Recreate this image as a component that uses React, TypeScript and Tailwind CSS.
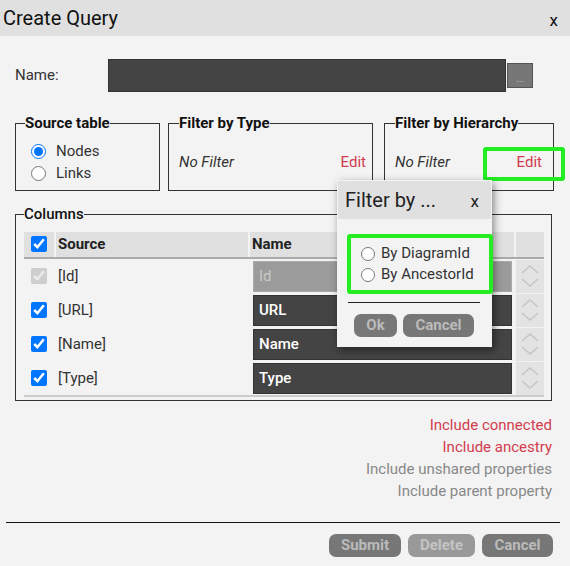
import React from "react";

const rows = [
  { source: "[Id]", name: "Id", locked: true },
  { source: "[URL]", name: "URL", locked: false },
  { source: "[Name]", name: "Name", locked: false },
  { source: "[Type]", name: "Type", locked: false },
];

function UpDown() {
  return (
    <svg width="18" height="26" viewBox="0 0 18 26" fill="none" stroke="#c4c4c4" strokeWidth="1.4">
      <path d="M1 10 L9 3 L17 10" />
      <path d="M1 16 L9 23 L17 16" />
    </svg>
  );
}

function FilterPopup() {
  return (
    <div className="absolute left-[337px] top-[180px] w-[155px] h-[167px] bg-[#f3f3f3] shadow-[2px_3px_8px_rgba(0,0,0,0.45)]">
      <div className="h-[38px] mx-[1px] mt-[1px] bg-[#e0e0e0] flex items-center justify-between pl-[7px] pr-[12px]">
        <span className="text-[20px] text-[#222]">Filter by ...</span>
        <span className="text-[17px] text-[#222] mt-[4px]">x</span>
      </div>
      <div className="ml-[10px] mt-[15px] w-[146px] h-[60px] border-[4px] border-[#22ee22] rounded-[3px] flex flex-col justify-center pl-[10px]">
        {["By DiagramId", "By AncestorId"].map(t => (
          <label key={t} className="flex items-center gap-[6px] text-[15px] leading-[21px] text-[#333]">
            <input type="radio" name="hier" className="m-0 w-[14px] h-[14px]" />
            {t}
          </label>
        ))}
      </div>
      <div className="mx-[11px] mt-[8px] w-[132px] border-t border-[#222]" />
      <div className="flex gap-[6px] ml-[17px] mt-[11px]">
        <button className="h-[23px] w-[43px] rounded-[7px] bg-[#777] text-[#bbb] text-[15px] font-bold">Ok</button>
        <button className="h-[23px] w-[71px] rounded-[7px] bg-[#777] text-[#bbb] text-[15px] font-bold">Cancel</button>
      </div>
    </div>
  );
}

export default function App() {
  return (
    <div className="relative w-[570px] h-[566px] bg-[#f3f3f3] overflow-hidden font-['Roboto',sans-serif] text-[#333]">
      {/* title bar */}
      <div className="h-[36px] bg-[#e0e0e0] flex items-center justify-between pl-[3px] pr-[12px]">
        <span className="text-[20px] text-[#111]">Create Query</span>
        <span className="text-[17px] text-[#111] mt-[6px]">x</span>
      </div>

      {/* name row */}
      <div className="flex items-center mt-[23px] pl-[15px]">
        <span className="w-[93px] text-[15px] text-[#333]">Name:</span>
        <div className="w-[398px] h-[33px] bg-[#444] border border-[#333]" />
        <button className="ml-[1px] w-[26px] h-[25px] bg-[#777] border border-[#555] text-[#bbb] text-[10px] leading-none pt-[6px]">...</button>
      </div>

      {/* filters row */}
      <div className="flex mt-[20px] pl-[15px]">
        <fieldset className="w-[145px] h-[79px] border border-[#333] pl-[9px] pt-[6px]">
          <legend className="text-[15px] font-bold text-[#111] px-0">Source table</legend>
          <div className="ml-[6px]">
            <label className="flex items-center gap-[10px] text-[15px] text-[#333] h-[22px]">
              <input type="radio" name="src" defaultChecked className="m-0 w-[15px] h-[15px]" />
              Nodes
            </label>
            <label className="flex items-center gap-[10px] text-[15px] text-[#333] h-[22px]">
              <input type="radio" name="src" className="m-0 w-[15px] h-[15px]" />
              Links
            </label>
          </div>
        </fieldset>
        <fieldset className="ml-[8px] w-[205px] h-[79px] border border-[#333] pl-[10px] pr-[6px]">
          <legend className="text-[15px] font-bold text-[#111] px-0">Filter by Type</legend>
          <div className="flex justify-between items-center mt-[16px] text-[15px]">
            <span className="italic text-[#333]">No Filter</span>
            <span className="text-[#d23c4e]">Edit</span>
          </div>
        </fieldset>
        <fieldset className="ml-[11px] w-[170px] h-[79px] border border-[#333] pl-[10px] pr-[10px]">
          <legend className="text-[15px] font-bold text-[#111] px-0">Filter by Hierarchy</legend>
          <div className="flex justify-between items-center mt-[16px] text-[15px]">
            <span className="italic text-[#333]">No Filter</span>
            <span className="text-[#d23c4e] mr-[1px]">Edit</span>
          </div>
        </fieldset>
      </div>

      {/* columns */}
      <fieldset className="ml-[15px] mt-[12px] w-[537px] h-[198px] border border-[#333] pl-[8px] pt-[6px]">
        <legend className="text-[15px] font-medium text-[#111] px-0">Columns</legend>
        <div className="grid grid-cols-[30px_192px_264px_28px] gap-x-[2px] border-b-2 border-[#aaa] w-[520px]">
          <div className="h-[25px] bg-[#e0e0e0] flex items-center justify-center">
            <input type="checkbox" defaultChecked className="m-0 w-[16px] h-[16px]" />
          </div>
          <div className="h-[25px] bg-[#e0e0e0] flex items-center pl-[2px] text-[15px] font-bold text-[#222]">Source</div>
          <div className="h-[25px] bg-[#e0e0e0] flex items-center pl-[2px] text-[15px] font-bold text-[#222]">Name</div>
          <div className="h-[25px] bg-[#e0e0e0]" />
        </div>
        <div className="grid grid-cols-[30px_192px_264px_28px] gap-x-[2px] gap-y-[1px] pt-[1px] border-b-2 border-[#ccc] w-[520px]">
          {rows.map(r => (
            <React.Fragment key={r.source}>
              <div className="h-[33px] flex items-center justify-center">
                <input type="checkbox" defaultChecked disabled={r.locked} className="m-0 w-[16px] h-[16px]" />
              </div>
              <div className="h-[33px] flex items-center pl-[2px] text-[15px] text-[#333]">{r.source}</div>
              <div className="h-[33px] pl-[3px] pr-[2px] py-[1px]">
                <div
                  className={`h-full flex items-center pl-[5px] text-[15px] border ${
                    r.locked ? "bg-[#9b9b9b] text-[#c8c8c8] border-[#aaa]" : "bg-[#444] text-white font-medium border-[#333]"
                  }`}
                >
                  {r.name}
                </div>
              </div>
              <div className="h-[33px] bg-[#e3e3e3] flex items-center justify-center">
                <UpDown />
              </div>
            </React.Fragment>
          ))}
        </div>
      </fieldset>

      {/* include options */}
      <div className="flex flex-col items-end pr-[18px] mt-[13px] text-[15px] leading-[22px]">
        <span className="text-[#d23c4e]">Include connected</span>
        <span className="text-[#d23c4e]">Include ancestry</span>
        <span className="text-[#888]">Include unshared properties</span>
        <span className="text-[#888]">Include parent property</span>
      </div>

      <div className="ml-[6px] mt-[20px] w-[554px] border-t-[1.5px] border-[#111]" />

      <div className="flex justify-end gap-[7px] pr-[17px] mt-[11px]">
        <button className="h-[23px] w-[72px] rounded-[7px] bg-[#777] text-[#bbb] text-[15px] font-bold">Submit</button>
        <button className="h-[23px] w-[67px] rounded-[7px] bg-[#999] text-[#c4c4c4] text-[15px] font-bold">Delete</button>
        <button className="h-[23px] w-[71px] rounded-[7px] bg-[#777] text-[#bbb] text-[15px] font-bold">Cancel</button>
      </div>

      {/* highlight around hierarchy Edit */}
      <div className="absolute left-[483px] top-[147px] w-[82px] h-[34px] border-[4px] border-[#22ee22] rounded-[3px]" />

      <FilterPopup />
    </div>
  );
}
